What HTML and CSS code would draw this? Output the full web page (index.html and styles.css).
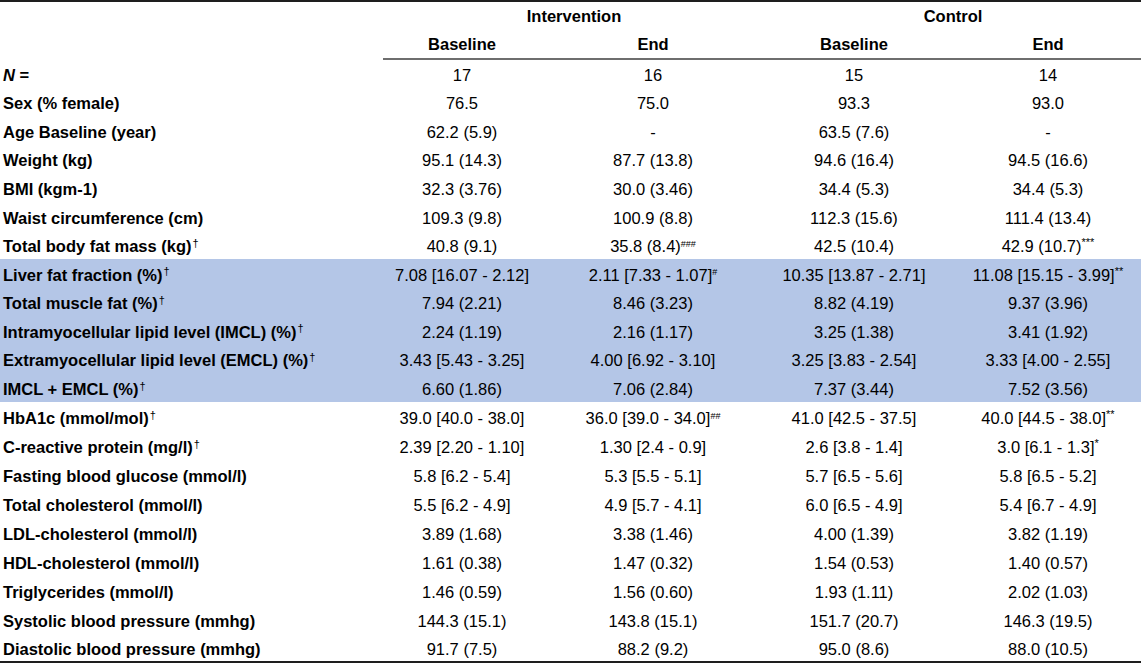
FILE: index.html
```html
<!DOCTYPE html>
<html lang="en">
<head>
<meta charset="utf-8">
<title>Table</title>
<link rel="stylesheet" href="styles.css">
</head>
<body>
<table class="data">
  <colgroup>
    <col class="c-label"><col class="c-ib"><col class="c-ie"><col class="c-cb"><col class="c-ce">
  </colgroup>
  <thead>
    <tr class="h1">
      <th></th>
      <th colspan="2" class="grp">Intervention</th>
      <th colspan="2" class="grp grp-c">Control</th>
    </tr>
    <tr class="h2">
      <th class="nob"></th>
      <th>Baseline</th>
      <th>End</th>
      <th>Baseline</th>
      <th class="last">End</th>
    </tr>
  </thead>
  <tbody>
    <tr><th><i>N</i> =</th><td>17</td><td>16</td><td>15</td><td class="last">14</td></tr>
    <tr><th>Sex (% female)</th><td>76.5</td><td>75.0</td><td>93.3</td><td class="last">93.0</td></tr>
    <tr><th>Age Baseline (year)</th><td>62.2 (5.9)</td><td>-</td><td>63.5 (7.6)</td><td class="last">-</td></tr>
    <tr><th>Weight (kg)</th><td>95.1 (14.3)</td><td>87.7 (13.8)</td><td>94.6 (16.4)</td><td class="last">94.5 (16.6)</td></tr>
    <tr><th>BMI (kgm-1)</th><td>32.3 (3.76)</td><td>30.0 (3.46)</td><td>34.4 (5.3)</td><td class="last">34.4 (5.3)</td></tr>
    <tr><th>Waist circumference (cm)</th><td>109.3 (9.8)</td><td>100.9 (8.8)</td><td>112.3 (15.6)</td><td class="last">111.4 (13.4)</td></tr>
    <tr><th>Total body fat mass (kg)<sup class="dg">†</sup></th><td>40.8 (9.1)</td><td>35.8 (8.4)<sup class="hs">###</sup></td><td>42.5 (10.4)</td><td class="last">42.9 (10.7)<sup class="st">***</sup></td></tr>
    <tr class="hl"><th>Liver fat fraction (%)<sup class="dg">†</sup></th><td>7.08 [16.07 - 2.12]</td><td>2.11 [7.33 - 1.07]<sup class="hs">#</sup></td><td>10.35 [13.87 - 2.71]</td><td class="last">11.08 [15.15 - 3.99]<sup class="st">**</sup></td></tr>
    <tr class="hl"><th>Total muscle fat (%)<sup class="dg">†</sup></th><td>7.94 (2.21)</td><td>8.46 (3.23)</td><td>8.82 (4.19)</td><td class="last">9.37 (3.96)</td></tr>
    <tr class="hl"><th>Intramyocellular lipid level (IMCL) (%)<sup class="dg">†</sup></th><td>2.24 (1.19)</td><td>2.16 (1.17)</td><td>3.25 (1.38)</td><td class="last">3.41 (1.92)</td></tr>
    <tr class="hl"><th>Extramyocellular lipid level (EMCL) (%)<sup class="dg">†</sup></th><td>3.43 [5.43 - 3.25]</td><td>4.00 [6.92 - 3.10]</td><td>3.25 [3.83 - 2.54]</td><td class="last">3.33 [4.00 - 2.55]</td></tr>
    <tr class="hl"><th>IMCL + EMCL (%)<sup class="dg">†</sup></th><td>6.60 (1.86)</td><td>7.06 (2.84)</td><td>7.37 (3.44)</td><td class="last">7.52 (3.56)</td></tr>
    <tr><th>HbA1c (mmol/mol)<sup class="dg">†</sup></th><td>39.0 [40.0 - 38.0]</td><td>36.0 [39.0 - 34.0]<sup class="hs">##</sup></td><td>41.0 [42.5 - 37.5]</td><td class="last">40.0 [44.5 - 38.0]<sup class="st">**</sup></td></tr>
    <tr><th>C-reactive protein (mg/l)<sup class="dg">†</sup></th><td>2.39 [2.20 - 1.10]</td><td>1.30 [2.4 - 0.9]</td><td>2.6 [3.8 - 1.4]</td><td class="last">3.0 [6.1 - 1.3]<sup class="st">*</sup></td></tr>
    <tr><th>Fasting blood glucose (mmol/l)</th><td>5.8 [6.2 - 5.4]</td><td>5.3 [5.5 - 5.1]</td><td>5.7 [6.5 - 5.6]</td><td class="last">5.8 [6.5 - 5.2]</td></tr>
    <tr><th>Total cholesterol (mmol/l)</th><td>5.5 [6.2 - 4.9]</td><td>4.9 [5.7 - 4.1]</td><td>6.0 [6.5 - 4.9]</td><td class="last">5.4 [6.7 - 4.9]</td></tr>
    <tr><th>LDL-cholesterol (mmol/l)</th><td>3.89 (1.68)</td><td>3.38 (1.46)</td><td>4.00 (1.39)</td><td class="last">3.82 (1.19)</td></tr>
    <tr><th>HDL-cholesterol (mmol/l)</th><td>1.61 (0.38)</td><td>1.47 (0.32)</td><td>1.54 (0.53)</td><td class="last">1.40 (0.57)</td></tr>
    <tr><th>Triglycerides (mmol/l)</th><td>1.46 (0.59)</td><td>1.56 (0.60)</td><td>1.93 (1.11)</td><td class="last">2.02 (1.03)</td></tr>
    <tr><th>Systolic blood pressure (mmhg)</th><td>144.3 (15.1)</td><td>143.8 (15.1)</td><td>151.7 (20.7)</td><td class="last">146.3 (19.5)</td></tr>
    <tr class="final"><th>Diastolic blood pressure (mmhg)</th><td>91.7 (7.5)</td><td>88.2 (9.2)</td><td>95.0 (8.6)</td><td class="last">88.0 (10.5)</td></tr>
  </tbody>
</table>
</body>
</html>
```
FILE: styles.css
```css
html, body {
  margin: 0;
  padding: 0;
  background: #ffffff;
}

.data {
  width: 1141px;
  table-layout: fixed;
  border-collapse: collapse;
  font-family: "Liberation Sans", Arial, sans-serif;
  font-size: 16.5px;
  color: #000;
  border-top: 2px solid #1e1e1e;
  border-bottom: 2px solid #1e1e1e;
}

.c-label { width: 383px; }
.c-ib { width: 158px; }
.c-ie { width: 224px; }
.c-cb { width: 178px; }
.c-ce { width: 198px; }

.data th,
.data td {
  padding: 0;
  white-space: nowrap;
  line-height: 1;
}

.data thead th {
  font-weight: bold;
  text-align: center;
}

.h1 { height: 29px; }
.h2 { height: 29px; }

.h2 th {
  padding-top: 1px;
  border-bottom: 2px solid #6e6e6e;
}
.h2 th.nob {
  border-bottom: none;
}

.data thead .last,
.data tbody .last {
  padding-left: 12px;
}

.grp-c {
  padding-left: 0;
}

.data tbody tr {
  height: 28.6px;
}

.data tbody .hl ~ tr:not(.hl) {
  height: 28.9px;
}

.data tbody tr.final {
  height: 29.6px;
}

.data tbody th,
.data tbody td {
  padding-top: 3px;
}

.data tbody .hl ~ tr:not(.hl) th,
.data tbody .hl ~ tr:not(.hl) td {
  padding-top: 4px;
}

.data tbody th {
  text-align: left;
  font-weight: bold;
  padding-left: 3px;
}

.data tbody td {
  text-align: center;
}

.hl th,
.hl td {
  background: #b4c6e7;
}

sup {
  line-height: 0;
  vertical-align: super;
}

.dg {
  font-size: 11px;
  font-weight: normal;
  position: relative;
  top: 1px;
  margin-left: 1px;
}

.hs {
  font-size: 9px;
  position: relative;
  top: 1px;
}

.st {
  font-size: 11px;
}
```
